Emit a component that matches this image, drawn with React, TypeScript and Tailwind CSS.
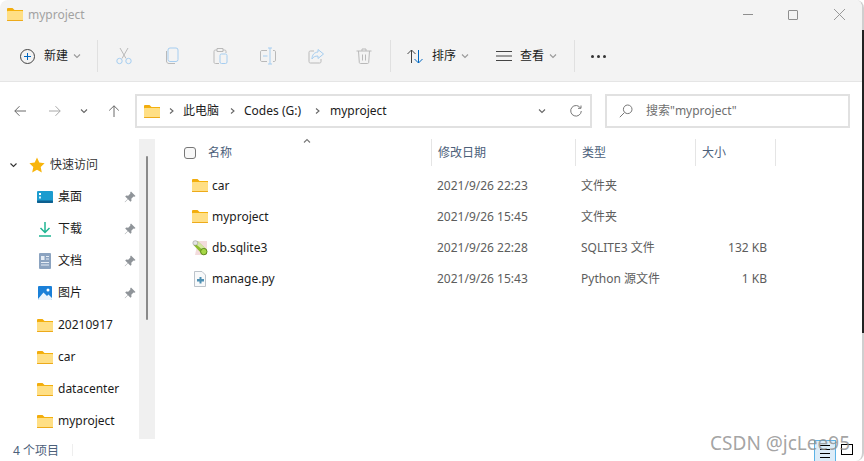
import type { ReactNode } from "react";

const font = "font-['Noto_Sans','Noto_Sans_CJK_SC',sans-serif]";

function Folder({ className = "" }: { className?: string }) {
  return (
    <svg className={`h-[13px] w-4 shrink-0 ${className}`} viewBox="0 0 16 13">
      <path d="M0 1.200C0 .5.5 0 1.200 0h4.300l2 2H16v3H0z" fill="#f2ac0d" />
      <rect x="0" y="2.400" width="16" height="10.600" rx="0.800" fill="#f5b50f" />
      <rect x="0" y="3" width="16" height="9.200" rx="0.600" fill="#ffdf85" />
      <path d="M0 12h16v.3c0 .4-.3.7-.7.7H.7c-.4 0-.7-.3-.7-.7z" fill="#edaa1a" />
    </svg>
  );
}

function Chevron({ className = "", stroke = "#8a8a8a", dir = "down" }: { className?: string; stroke?: string; dir?: "down" | "right" | "up" }) {
  const d = dir === "down" ? "M1 1.500 4 4.500 7 1.500" : dir === "up" ? "M1 4.500 4 1.500 7 4.500" : "M2 .5 5 3 2 5.500";
  return (
    <svg className={`h-1.5 w-2 shrink-0 ${className}`} viewBox="0 0 8 6" fill="none" stroke={stroke} strokeWidth="1.100">
      <path d={d} />
    </svg>
  );
}

function ToolIcon({ children, className = "" }: { children: ReactNode; className?: string }) {
  return (
    <svg className={`h-[18px] w-[18px] shrink-0 ${className}`} viewBox="0 0 18 18" fill="none" strokeWidth="1">
      {children}
    </svg>
  );
}

const disabledTools = [
  <>
    <path d="M5 1 11 11.500M13 1 7 11.500" stroke="#b9b9b9" />
    <circle cx="4.500" cy="14" r="2.700" stroke="#a5cdf0" />
    <circle cx="13.500" cy="14" r="2.700" stroke="#a5cdf0" />
  </>,
  <>
    <rect x="5" y="1" width="10" height="13.500" rx="2" stroke="#a5cdf0" />
    <path d="M3.500 4v10c0 1.500 1 2.500 2.500 2.500h6" stroke="#b9b9b9" />
  </>,
  <>
    <path d="M6 3H4.500C3.500 3 3 3.500 3 4.500V15c0 1 .5 1.500 1.500 1.500H8M12 3h1.500c1 0 1.500.5 1.500 1.500V6M6 1.500h6v3H6z" stroke="#b9b9b9" />
    <rect x="9" y="7" width="7" height="9.500" rx="1.500" stroke="#a5cdf0" />
  </>,
  <>
    <path d="M8 3.500H3c-1 0-1.500.5-1.500 1.500v8c0 1 .5 1.500 1.500 1.500h5M14 3.500h1c1 0 1.500.5 1.500 1.500v8c0 1-.5 1.500-1.500 1.500h-1" stroke="#b9b9b9" />
    <path d="M9 1h4M9 17h4M11 1v16M4 9h4.500" stroke="#a5cdf0" />
  </>,
  <>
    <path d="M7 4H3.500C2.500 4 2 4.500 2 5.500v9C2 15.500 2.500 16 3.500 16h9c1 0 1.500-.5 1.500-1.500V12" stroke="#b9b9b9" />
    <path d="M11 2.500 16.500 7 11 11.500V9c-3 0-5 1-6 3 0-4 2-6.500 6-7z" stroke="#a5cdf0" />
  </>,
  <>
    <path d="M1.500 4h15M7 4V2h4v2M3.500 4l.8 11.500c.1.700.6 1 1.200 1h7c.6 0 1.100-.3 1.200-1L14.500 4M7.500 7.500v6M10.500 7.500v6" stroke="#b9b9b9" />
  </>,
];

function Separator() {
  return <div className="h-8 w-px shrink-0 bg-[#e0e0e0]" />;
}

function TitleBar() {
  return (
    <div className="flex h-7 items-center pl-[7px] pt-px">
      <Folder />
      <span className="ml-[5px] text-[12px] text-[#a2a2a2]">myproject</span>
      <div className="ml-auto flex items-center">
        <div className="h-px w-2.5 bg-[#8e8e8e]" />
        <div className="ml-[35px] h-2.5 w-2.5 rounded-[1px] border border-[#8e8e8e]" />
        <svg className="ml-9 mr-[17px] h-[11px] w-[11px]" viewBox="0 0 11 11" stroke="#8e8e8e" strokeWidth="0.900">
          <path d="M0 0 11 11M11 0 0 11" />
        </svg>
      </div>
    </div>
  );
}

function Toolbar() {
  return (
    <div className="flex h-[54px] items-center border-b border-[#e5e5e5] pt-[3px] text-[12px] text-[#1b1b1b]">
      <svg className="ml-5 h-[15px] w-[15px] shrink-0" viewBox="0 0 15 15" fill="none">
        <circle cx="7.500" cy="7.500" r="7" stroke="#444" />
        <path d="M7.500 4v7M4 7.500h7" stroke="#0067c0" />
      </svg>
      <span className="ml-[9px]">新建</span>
      <Chevron className="ml-[5px] mr-4" stroke="#999" />
      <Separator />
      <div className="ml-[17px] flex w-[275px] gap-[30px]">
        {disabledTools.map((tool, i) => (
          <ToolIcon key={i}>{tool}</ToolIcon>
        ))}
      </div>
      <Separator />
      <svg className="ml-4 h-[15px] w-4 shrink-0" viewBox="0 0 16 15" fill="none">
        <path d="M4.500 14V1M.5 5l4-4 4 4" stroke="#444" />
        <path d="M11.500 1v13M7.500 10l4 4 4-4" stroke="#0067c0" />
      </svg>
      <span className="ml-[9px]">排序</span>
      <Chevron className="ml-[5px]" stroke="#999" />
      <svg className="ml-[27px] h-3 w-4 shrink-0" viewBox="0 0 16 12" stroke="#444">
        <path d="M0 1.500h16M0 6h16M0 10.500h16" />
      </svg>
      <span className="ml-2">查看</span>
      <Chevron className="ml-[5px] mr-[17px]" stroke="#999" />
      <Separator />
      <div className="ml-4 flex gap-[3px]">
        <div className="h-[3px] w-[3px] rounded-full bg-[#333]" />
        <div className="h-[3px] w-[3px] rounded-full bg-[#333]" />
        <div className="h-[3px] w-[3px] rounded-full bg-[#333]" />
      </div>
    </div>
  );
}

function AddressRow() {
  return (
    <div className="flex h-[52px] items-center pt-1.5 text-[12px] text-[#1b1b1b]">
      <svg className="ml-3.5 h-3 w-3" viewBox="0 0 12 12" fill="none" stroke="#6a6a6a">
        <path d="M12 6H.8M5.500 1.200.8 6l4.700 4.800" />
      </svg>
      <svg className="ml-[23px] h-3 w-3" viewBox="0 0 12 12" fill="none" stroke="#a8a8a8">
        <path d="M0 6h11.200M6.500 1.200 11.200 6l-4.700 4.800" />
      </svg>
      <Chevron className="ml-[19px]" stroke="#666" />
      <svg className="ml-5 h-3 w-3" viewBox="0 0 12 12" fill="none" stroke="#6a6a6a">
        <path d="M6 12V.8M1.200 5.500 6 .8l4.800 4.700" />
      </svg>
      <div className="ml-[15px] flex h-[34px] w-[457px] items-center border-2 border-[#e1e1e1] pl-[7px]">
        <Folder />
        <Chevron className="ml-2 w-1.5" dir="right" stroke="#666" />
        <span className="ml-[7px]">此电脑</span>
        <Chevron className="ml-2.5 w-1.5" dir="right" stroke="#666" />
        <span className="ml-[7px]">Codes (G:)</span>
        <Chevron className="ml-[13px] w-1.5" dir="right" stroke="#666" />
        <span className="ml-2">myproject</span>
        <Chevron className="ml-[150px] w-2.5" stroke="#666" />
        <svg className="ml-[23px] h-3 w-3" viewBox="0 0 12 12" fill="none" stroke="#777">
          <path d="M10.500 3A5.300 5.300 0 1 0 11.300 6M11 .5V3.300H8" />
        </svg>
      </div>
      <div className="ml-[13px] flex h-[34px] w-[245px] items-center border-2 border-[#e1e1e1] pl-3 text-[#6f6f6f]">
        <svg className="h-3.5 w-3.5 shrink-0" viewBox="0 0 14 14" fill="none" stroke="#777">
          <circle cx="8.700" cy="5.300" r="4.300" />
          <path d="M5.500 8.500.8 13.200" />
        </svg>
        <span className="ml-[13px]">搜索"myproject"</span>
      </div>
    </div>
  );
}

function DesktopIcon() {
  return (
    <svg className="h-3 w-4" viewBox="0 0 16 12">
      <rect width="16" height="12" rx="1" fill="#1c9ccf" />
      <rect y="9.500" width="16" height="2.500" rx="1" fill="#0d5f8f" />
      <rect x="2" y="2" width="2" height="2" fill="#fff" />
      <rect x="2" y="5.500" width="2" height="2" fill="#d0f0ff" />
    </svg>
  );
}

function DownloadIcon() {
  return (
    <svg className="h-4 w-4" viewBox="0 0 16 16" fill="none" stroke="#1fb592" strokeWidth="1.500">
      <path d="M8 1v10M3.500 7 8 11.500 12.500 7M2 15h12" />
    </svg>
  );
}

function DocIcon() {
  return (
    <svg className="h-4 w-4" viewBox="0 0 16 16">
      <rect x="2" width="12" height="16" rx="1" fill="#8ba3c0" />
      <rect x="4" y="3" width="3.500" height="4" fill="#e6edf5" />
      <path d="M9 3h3v1H9zM9 5.500h3v1H9zM4 9h8v1H4zM4 11.500h8v1H4z" fill="#e6edf5" />
    </svg>
  );
}

function PictureIcon() {
  return (
    <svg className="h-4 w-4" viewBox="0 0 16 16">
      <rect x="1" y="1" width="14" height="14" rx="1" fill="#1a80d8" />
      <path d="M1 14 6.500 7.500 10 11l1.500-1.500L15 13v1c0 .6-.4 1-1 1H2c-.6 0-1-.4-1-1z" fill="#e8f3fc" />
      <circle cx="11" cy="5" r="1.500" fill="#fff" />
    </svg>
  );
}

function Pin() {
  return (
    <svg className="ml-auto mr-[3px] h-3 w-3 shrink-0" viewBox="0 0 12 12" fill="#8f9499">
      <path d="M7 .5 11.500 5l-1 .8-1-.2L7.300 7.800l.2 2-1 1L4 8.300 1 11.300.7 11l3-3L1.200 5.500l1-1 2 .2L6.400 2.500l-.2-1z" />
    </svg>
  );
}

const quickItems = [
  { label: "桌面", icon: <DesktopIcon />, pinned: true },
  { label: "下载", icon: <DownloadIcon />, pinned: true },
  { label: "文档", icon: <DocIcon />, pinned: true },
  { label: "图片", icon: <PictureIcon />, pinned: true },
  { label: "20210917", icon: <Folder />, pinned: false },
  { label: "car", icon: <Folder />, pinned: false },
  { label: "datacenter", icon: <Folder />, pinned: false },
  { label: "myproject", icon: <Folder />, pinned: false },
];

function Sidebar() {
  return (
    <div className="flex w-[157px] shrink-0 pt-[5px]">
      <div className="w-[139px] pl-[9px] pt-2.5 text-[12px] text-[#1b1b1b]">
        <div className="flex h-8 items-center">
          <Chevron className="w-[9px]" stroke="#333" />
          <svg className="ml-[11px] h-4 w-4 shrink-0" viewBox="0 0 16 16" fill="#f8b50c">
            <path d="M8 .5 10.300 5.600 15.600 6.200 11.700 10l1.100 5.500L8 12.700 3.200 15.500 4.300 10 .4 6.200 5.700 5.600z" />
          </svg>
          <span className="ml-[5px] text-[#333]">快速访问</span>
        </div>
        {quickItems.map((item) => (
          <div key={item.label} className="flex h-8 items-center pl-7">
            <div className="flex w-4 shrink-0 justify-center">{item.icon}</div>
            <span className="ml-[5px]">{item.label}</span>
            {item.pinned ? <Pin /> : null}
          </div>
        ))}
      </div>
      <div className="h-[300px] w-4 bg-[#f0f0f0] pl-[7px] pt-[17px]">
        <div className="h-[164px] w-[2px] rounded-full bg-[#8a8a8a]" />
      </div>
    </div>
  );
}

function SqliteIcon() {
  return (
    <svg className="h-4 w-4 shrink-0" viewBox="0 0 16 16">
      <path d="M6 1h9v14H3z" fill="#f3dcdc" />
      <path d="M1.500 5 5.500 1 14.500 9.500 10 14z" fill="#8dbb2c" />
      <path d="M3 3.500 5.500 1 14 9l-2 2z" fill="#d4e8a0" />
      <circle cx="11.800" cy="11.600" r="3.200" fill="#a6d646" stroke="#5c8a1c" />
      <ellipse cx="3.300" cy="3" rx="2.500" ry="2.300" fill="#e4e4e4" stroke="#8a8a8a" strokeWidth="0.500" />
    </svg>
  );
}

function PyIcon() {
  return (
    <svg className="h-4 w-4 shrink-0" viewBox="0 0 16 16">
      <path d="M2.500.5h7.500l3.500 3.500v11.500h-11z" fill="#f8f9fa" stroke="#bcc3ca" />
      <path d="M5 8h2.500V6h2v2H12v2.500H9.500v2h-2v-2H5z" fill="#4f90b3" />
    </svg>
  );
}

const files = [
  { name: "car", date: "2021/9/26 22:23", type: "文件夹", size: "", icon: <Folder /> },
  { name: "myproject", date: "2021/9/26 15:45", type: "文件夹", size: "", icon: <Folder /> },
  { name: "db.sqlite3", date: "2021/9/26 22:28", type: "SQLITE3 文件", size: "132 KB", icon: <SqliteIcon /> },
  { name: "manage.py", date: "2021/9/26 15:43", type: "Python 源文件", size: "1 KB", icon: <PyIcon /> },
];

function FileList() {
  return (
    <div className="relative flex-1 pt-[5px] text-[12px]">
      <Chevron className="absolute left-[145px] top-[4px] w-2.5" dir="up" stroke="#777" />
      <div className="flex h-[27px] items-center text-[#4c607a]">
        <div className="ml-[27px] h-3 w-3 rounded-[3px] border border-[#777] bg-[#f8f8f8]" />
        <div className="ml-[12px] w-[223px]">名称</div>
        <div className="h-[27px] w-[144px] border-l border-[#e5e5e5] pl-1.5 leading-[27px]">修改日期</div>
        <div className="h-[27px] w-[120px] border-l border-[#e5e5e5] pl-1.5 leading-[27px]">类型</div>
        <div className="h-[27px] w-[81px] border-x border-[#e5e5e5] pl-1.5 leading-[27px]">大小</div>
      </div>
      <div className="pt-1">
        {files.map((file) => (
          <div key={file.name} className="flex h-[31px] items-center text-[#5d5d5d]">
            <div className="ml-[35px] flex w-4 shrink-0 justify-center">{file.icon}</div>
            <span className="ml-1 w-[225px] text-[#1b1b1b]">{file.name}</span>
            <span className="w-[144px]">{file.date}</span>
            <span className="w-[120px]">{file.type}</span>
            <span className="w-[66px] text-right">{file.size}</span>
          </div>
        ))}
      </div>
    </div>
  );
}

function StatusBar() {
  return (
    <div className="flex h-[22px] items-center pl-[13px] text-[12px] text-[#4c607a]">
      <span className="pt-0.5">4 个项目</span>
      <div className="ml-[13px] h-3 w-px bg-[#eeeeee]" />
      <div className="ml-auto mr-[9px] flex h-full items-end">
        <div className="flex h-[21px] w-[22px] flex-col justify-center gap-[3px] border-x border-t border-[#5cb3e6] bg-[#dcecf8] px-[5px]">
          <div className="h-px bg-black" />
          <div className="h-px bg-black" />
          <div className="h-px bg-black" />
          <div className="h-px bg-black" />
        </div>
        <div className="ml-[5px] mb-[6px] h-[11px] w-3 border border-black" />
      </div>
    </div>
  );
}

export default function App() {
  return (
    <div className={`relative h-[461px] w-[864px] overflow-hidden bg-white ${font}`}>
      <div className="flex h-full flex-col overflow-hidden rounded-[8px] border-r-2 border-[#cfcfcf]">
        <div className="bg-[#f3f3f3]">
          <TitleBar />
          <Toolbar />
        </div>
        <AddressRow />
        <div className="flex min-h-0 flex-1">
          <Sidebar />
          <FileList />
        </div>
        <StatusBar />
      </div>
      <div className="absolute right-0 top-[30px] h-[303px] w-[2px] bg-[#222]" />
      <div className="absolute bottom-[6px] right-[14px] text-[19px] leading-6 text-[#8c8c8c]/80">CSDN @jcLee95</div>
    </div>
  );
}
